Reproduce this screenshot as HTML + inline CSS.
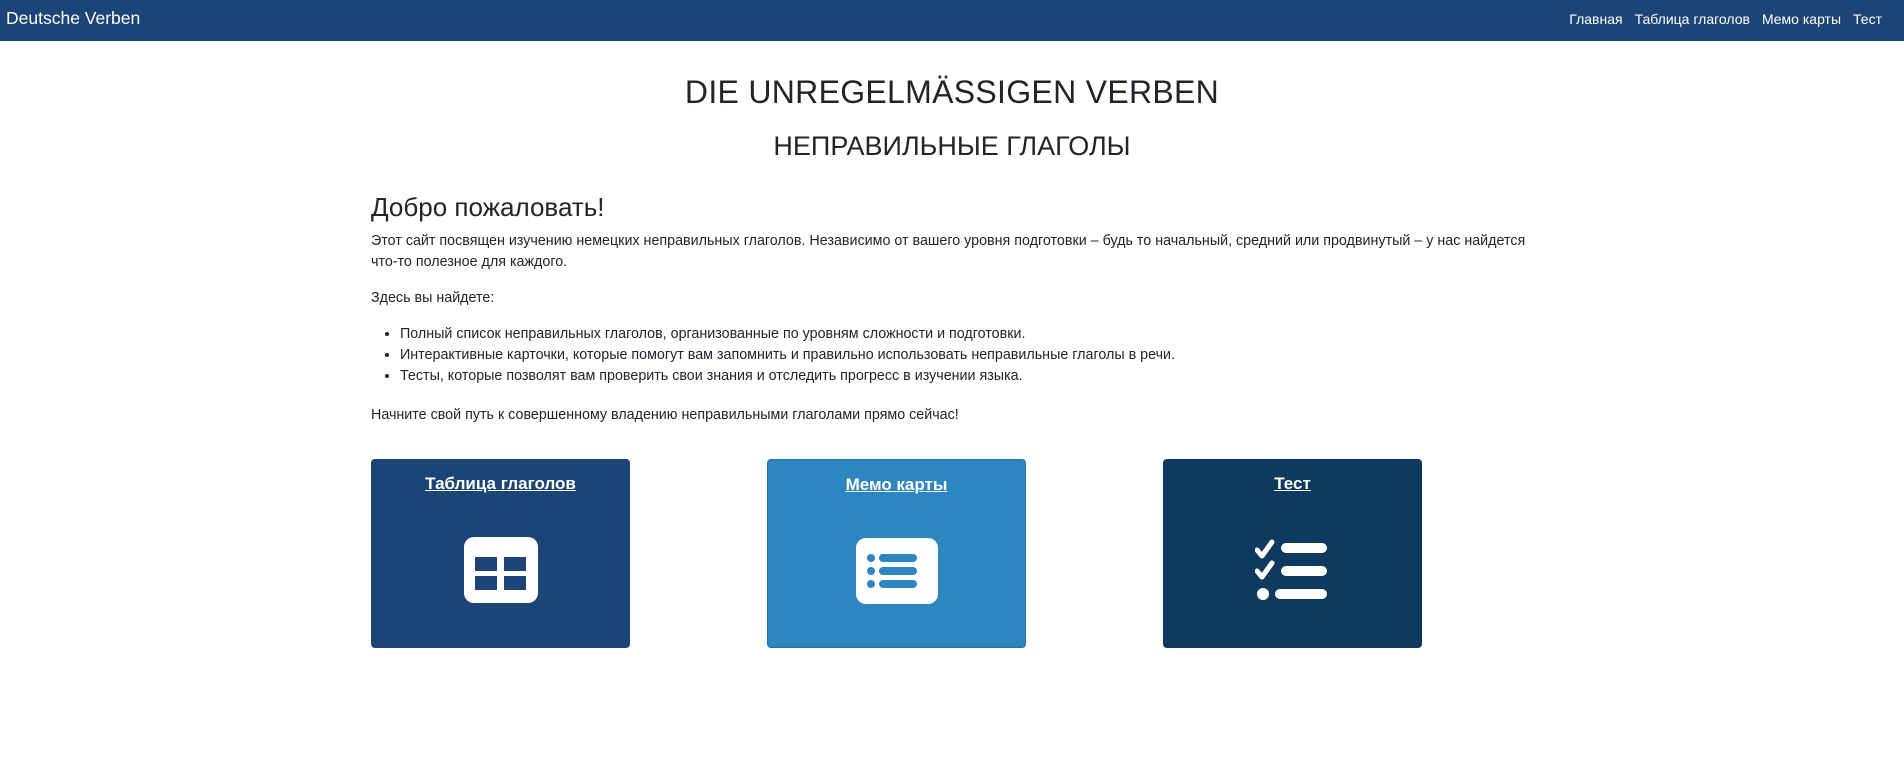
<!DOCTYPE html>
<html><head><meta charset="utf-8"><style>
*{box-sizing:border-box;margin:0;padding:0}
body{width:1904px;height:775px;background:#fff;font-family:"Liberation Sans",sans-serif;color:#212529;overflow:hidden}
.nav{height:41px;background:#1d4476;position:relative;color:#fff}
.brand{position:absolute;left:6px;top:8px;font-size:17.5px}
.links{position:absolute;right:22px;top:11px;font-size:14px}
.links span{margin-left:12px}
.c{position:absolute;left:371px;width:1200px}
h1{position:absolute;left:0;width:1904px;text-align:center;font-weight:500;font-size:32px;top:74px;letter-spacing:0.3px}
h2{position:absolute;left:0;width:1904px;text-align:center;font-weight:500;font-size:27px;top:131px}
h3{font-weight:500;font-size:26px;top:192px}
p,li{font-size:14.3px;line-height:21px}
.card{position:absolute;top:459px;width:259px;height:189px;border-radius:4px;text-align:center;color:#fff}
.card .t{margin-top:15px;font-weight:bold;font-size:17px;text-decoration:underline}
.card svg{position:absolute;left:50%;top:78px;transform:translateX(-50%)}
</style></head><body>
<div class="nav"><div class="brand">Deutsche Verben</div>
<div class="links"><span>Главная</span><span>Таблица глаголов</span><span>Мемо карты</span><span>Тест</span></div></div>
<h1>DIE UNREGELMÄSSIGEN VERBEN</h1>
<h2>НЕПРАВИЛЬНЫЕ ГЛАГОЛЫ</h2>
<h3 class="c">Добро пожаловать!</h3>
<p class="c" style="top:231px">Этот сайт посвящен изучению немецких неправильных глаголов. Независимо от вашего уровня подготовки – будь то начальный, средний или продвинутый – у нас найдется<br>что-то полезное для каждого.</p>
<p class="c" style="top:288px">Здесь вы найдете:</p>
<ul class="c" style="top:324px;padding-left:29px">
<li>Полный список неправильных глаголов, организованные по уровням сложности и подготовки.</li>
<li>Интерактивные карточки, которые помогут вам запомнить и правильно использовать неправильные глаголы в речи.</li>
<li>Тесты, которые позволят вам проверить свои знания и отследить прогресс в изучении языка.</li>
</ul>
<p class="c" style="top:405px">Начните свой путь к совершенному владению неправильными глаголами прямо сейчас!</p>
<div class="card" style="left:371px;background:#1d4476"><div class="t">Таблица глаголов</div>
<svg width="74" height="66" viewBox="0 0 74 66"><rect x="0" y="0" width="74" height="66" rx="10" fill="#fff"/><rect x="11" y="20" width="22" height="14" fill="#1d4476"/><rect x="40" y="20" width="22" height="14" fill="#1d4476"/><rect x="11" y="39" width="22" height="14" fill="#1d4476"/><rect x="40" y="39" width="22" height="14" fill="#1d4476"/></svg></div>
<div class="card" style="left:767px;background:#2e86c1;border:1px solid #2670a8"><div class="t">Мемо карты</div>
<svg width="82" height="66" viewBox="0 0 82 66"><rect x="0" y="0" width="82" height="66" rx="10" fill="#fff"/><g fill="#2e86c1"><circle cx="15" cy="20" r="4"/><circle cx="15" cy="33" r="4"/><circle cx="15" cy="46" r="4"/><rect x="23" y="16" width="38" height="8" rx="4"/><rect x="23" y="29" width="38" height="8" rx="4"/><rect x="23" y="42" width="38" height="8" rx="4"/></g></svg></div>
<div class="card" style="left:1163px;background:#0f3a60"><div class="t">Тест</div>
<svg width="76" height="66" viewBox="0 0 76 66" style="top:76px"><g fill="#fff"><path d="M2 15l5 6 10-14" stroke="#fff" stroke-width="5" fill="none" stroke-linecap="round" stroke-linejoin="round"/><path d="M2 36l5 6 10-14" stroke="#fff" stroke-width="5" fill="none" stroke-linecap="round" stroke-linejoin="round"/><circle cx="8" cy="59" r="6"/><rect x="26" y="8" width="46" height="10" rx="5"/><rect x="26" y="31" width="46" height="10" rx="5"/><rect x="20" y="54" width="52" height="10" rx="5"/></g></svg></div>
</body></html>
